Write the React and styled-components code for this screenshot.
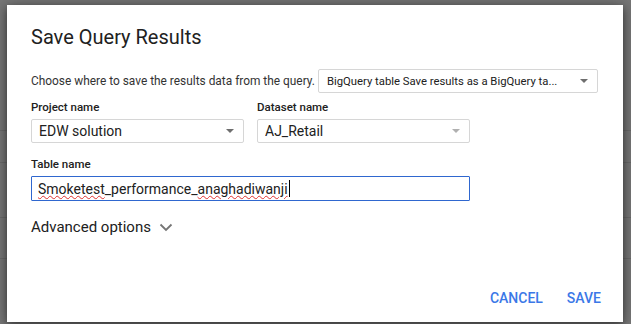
import React from "react"
import styled, { createGlobalStyle } from "styled-components"

const Global = createGlobalStyle`
  html, body {
    margin: 0;
    padding: 0;
    width: 631px;
    height: 324px;
    overflow: hidden;
  }
  body {
    font-family: Roboto, "Liberation Sans", Arial, sans-serif;
    background-color: #777;
    background-image:
      linear-gradient(to bottom,
        transparent 130px, #6a6a6a 130px, #6a6a6a 131px, transparent 131px,
        transparent 162px, #6a6a6a 162px, #6a6a6a 163px, transparent 163px,
        transparent 217px, #6a6a6a 217px, #6a6a6a 218px, transparent 218px,
        transparent 258px, #6a6a6a 258px, #6a6a6a 259px, transparent 259px);
  }
`

const Backdrop = styled.div`
  display: flex;
  align-items: flex-start;
  padding: 5px 0 0 7px;
`

const Dialog = styled.div`
  width: 616px;
  height: 317px;
  box-sizing: border-box;
  background: #fff;
  box-shadow: 0 3px 8px rgba(0, 0, 0, 0.45), 0 0 18px rgba(0, 0, 0, 0.25);
  padding: 20px 22px 16px 24px;
  display: flex;
  flex-direction: column;
  color: #212121;
`

const Title = styled.h2`
  margin: 0;
  font-size: 20px;
  font-weight: 400;
  line-height: 24px;
  color: #212121;
`

const ChooseRow = styled.div`
  display: flex;
  align-items: center;
  gap: 3px;
  margin-top: 20px;
  font-size: 11.9px;
  color: #333;
  white-space: nowrap;
`

const FieldRow = styled.div`
  display: flex;
  gap: 13px;
  margin-top: ${p => p.$top || 0}px;
`

const Field = styled.div`
  display: flex;
  flex-direction: column;
`

const Label = styled.label`
  font-size: 11.5px;
  font-weight: 500;
  line-height: 14px;
  color: #212121;
  margin-bottom: 5px;
`

const Select = styled.div`
  box-sizing: border-box;
  flex-shrink: 0;
  width: ${p => p.$w}px;
  height: 24px;
  border: 1px solid #d6d6d6;
  border-radius: 2px;
  background: #fff;
  display: flex;
  align-items: center;
  padding: 0 9px 0 ${p => p.$pl || 7}px;
  font-size: ${p => p.$fs || 14}px;
  color: #212121;
`

const SelectText = styled.span`
  flex: 1;
  white-space: nowrap;
  overflow: hidden;
`

const Caret = styled.span`
  width: 0;
  height: 0;
  border-left: 4.5px solid transparent;
  border-right: 4.5px solid transparent;
  border-top: 4.5px solid ${p => (p.$light ? "#b0b0b0" : "#6e6e6e")};
  margin-left: 8px;
`

const Input = styled.div`
  box-sizing: border-box;
  width: 439px;
  height: 25px;
  border: 1px solid #2f67cf;
  border-radius: 1px;
  display: flex;
  align-items: center;
  padding: 0 6px;
  font-size: 14px;
  color: #212121;
`

const Misspelled = styled.span`
  text-decoration: underline wavy #e0312f;
  text-decoration-thickness: 1px;
  text-underline-offset: 1px;
`

const CursorMark = styled.span`
  display: inline-block;
  width: 1px;
  height: 17px;
  background: #000;
  margin-left: 1px;
`

const Advanced = styled.div`
  display: flex;
  align-items: center;
  gap: 8px;
  margin-top: 17px;
  font-size: 15px;
  color: #212121;
`

const Actions = styled.div`
  margin-top: auto;
  display: flex;
  justify-content: flex-end;
  gap: 24px;
`

const TextButton = styled.button`
  border: 0;
  background: none;
  padding: 0;
  font-family: inherit;
  font-size: 14px;
  font-weight: 500;
  letter-spacing: 0;
  color: #3b78e7;
  text-transform: uppercase;
  cursor: pointer;
`

export default function App() {
  return (
    <>
      <Global />
      <Backdrop>
        <Dialog>
          <Title>Save Query Results</Title>
          <ChooseRow>
            <span>Choose where to save the results data from the query.</span>
            <Select $w={280} $fs={11.3} $pl={8}>
              <SelectText>BigQuery table Save results as a BigQuery ta...</SelectText>
              <Caret />
            </Select>
          </ChooseRow>
          <FieldRow $top={7}>
            <Field>
              <Label>Project name</Label>
              <Select $w={213}>
                <SelectText>EDW solution</SelectText>
                <Caret />
              </Select>
            </Field>
            <Field>
              <Label>Dataset name</Label>
              <Select $w={213}>
                <SelectText>AJ_Retail</SelectText>
                <Caret $light />
              </Select>
            </Field>
          </FieldRow>
          <FieldRow $top={14}>
            <Field>
              <Label>Table name</Label>
              <Input>
                <Misspelled>Smoketest</Misspelled>
                <span>_performance_</span>
                <Misspelled>anaghadiwanji</Misspelled>
                <CursorMark />
              </Input>
            </Field>
          </FieldRow>
          <Advanced>
            <span>Advanced options</span>
            <svg width="14" height="9" viewBox="0 0 14 9">
              <path d="M1.5 1.5 L7 7 L12.5 1.5" fill="none" stroke="#757575" strokeWidth="1.8" />
            </svg>
          </Advanced>
          <Actions>
            <TextButton>Cancel</TextButton>
            <TextButton>Save</TextButton>
          </Actions>
        </Dialog>
      </Backdrop>
    </>
  )
}
